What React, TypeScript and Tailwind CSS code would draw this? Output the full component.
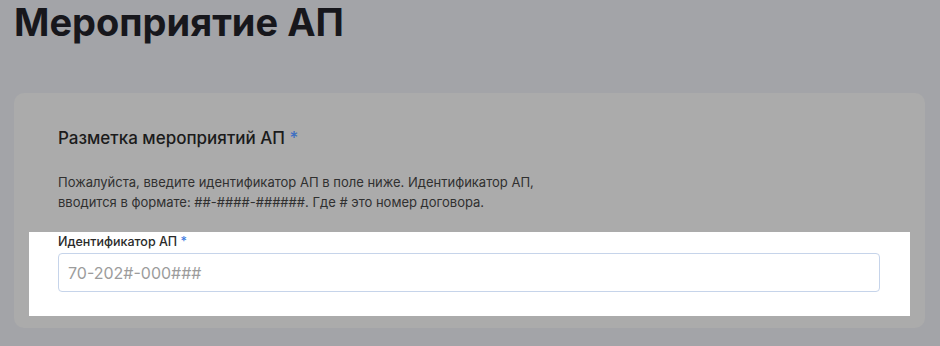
import React from 'react';

const App: React.FC = () => {
    return (
        <div
            className="w-[940px] h-[346px] overflow-hidden bg-[#a3a4a8] px-[14px] text-[#1c1c1f]"
            style={{ fontFamily: 'Inter, "Noto Sans", sans-serif' }}
        >
            <h1 className="text-[38px] font-bold leading-[44px] text-[#17171c]">
                Мероприятие АП
            </h1>
            <div className="mt-[49px] w-[911px] rounded-[10px] bg-[#ababab] px-[15px] pt-[33px] pb-[12px]">
                <h2 className="px-[29px] text-[17px] font-medium leading-6 text-[#1b1b1b]">
                    Разметка мероприятий АП <span className="text-[#3d6fc2]">*</span>
                </h2>
                <p className="mt-[22px] px-[29px] text-[13px] leading-5 text-[#303030]">
                    Пожалуйста, введите идентификатор АП в поле ниже. Идентификатор АП,
                    <br />
                    вводится в формате: ##-####-######. Где # это номер договора.
                </p>
                <div className="mt-[20px] bg-white pl-[29px] pr-[30px] pt-[2px] pb-[24px]">
                    <label className="block text-[12.5px] font-medium leading-4 text-[#2a2a2a]">
                        Идентификатор АП <span className="text-[#3d7be0]">*</span>
                    </label>
                    <input
                        type="text"
                        placeholder="70-202#-000###"
                        className="mt-[3px] block h-[39px] w-full rounded-[4px] border border-[#c6d4ea] bg-white px-[9px] text-[16px] text-[#333] placeholder:text-[#9c9c9c] outline-none"
                    />
                </div>
            </div>
        </div>
    );
};

export default App;
